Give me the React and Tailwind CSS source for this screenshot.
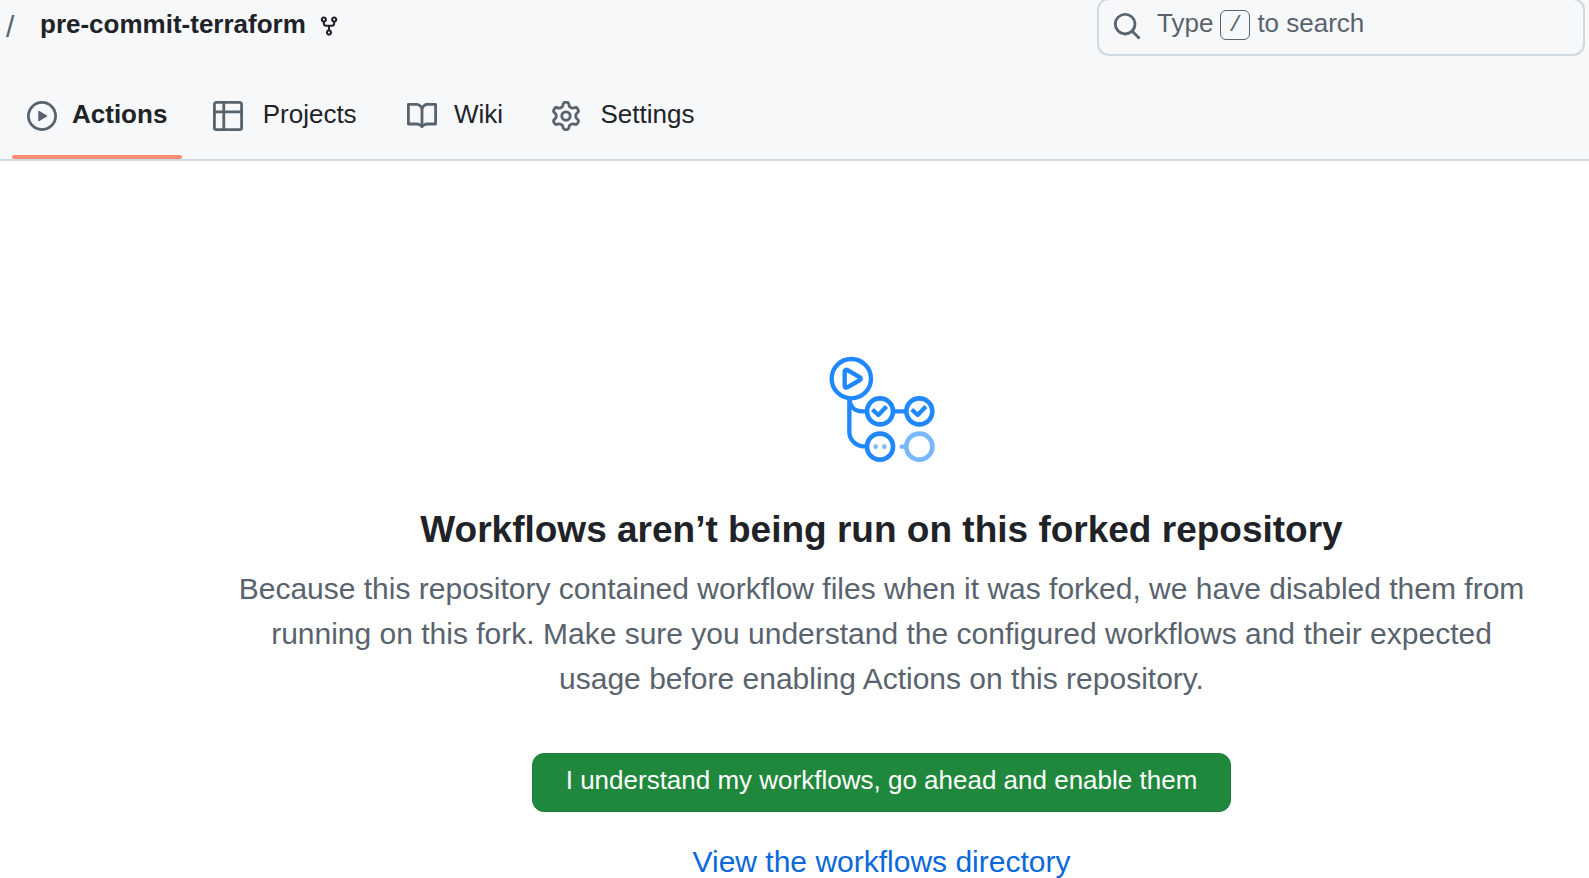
const icons = {
  play: "M8 0a8 8 0 1 1 0 16A8 8 0 0 1 8 0ZM1.5 8a6.5 6.5 0 1 0 13 0 6.5 6.5 0 0 0-13 0Zm4.879-2.773 4.264 2.559a.25.25 0 0 1 0 .428l-4.264 2.559A.25.25 0 0 1 6 10.559V5.442a.25.25 0 0 1 .379-.215Z",
  table: "M0 1.75C0 .784.784 0 1.75 0h12.5C15.216 0 16 .784 16 1.75v12.5A1.75 1.75 0 0 1 14.25 16H1.75A1.75 1.75 0 0 1 0 14.25ZM6.5 6.5v8h7.75a.25.25 0 0 0 .25-.25V6.5Zm8-1.5V1.75a.25.25 0 0 0-.25-.25H6.5V5Zm-13 1.5v7.75c0 .138.112.25.25.25H5v-8ZM5 5V1.5H1.75a.25.25 0 0 0-.25.25V5Z",
  book: "M0 1.75A.75.75 0 0 1 .75 1h4.253c1.227 0 2.317.59 3 1.501A3.743 3.743 0 0 1 11.006 1h4.245a.75.75 0 0 1 .75.75v10.5a.75.75 0 0 1-.75.75h-4.507a2.25 2.25 0 0 0-1.591.659l-.622.621a.75.75 0 0 1-1.06 0l-.622-.621A2.25 2.25 0 0 0 5.258 13H.75a.75.75 0 0 1-.75-.75Zm7.251 10.324.004-5.073-.002-2.253A2.25 2.25 0 0 0 5.003 2.5H1.5v9h3.757a3.75 3.75 0 0 1 1.994.574ZM8.755 4.75l-.004 7.322a3.752 3.752 0 0 1 1.992-.572H14.5v-9h-3.495a2.25 2.25 0 0 0-2.25 2.25Z",
  gear: "M8 0a8.2 8.2 0 0 1 .701.031C9.444.095 9.99.645 10.16 1.29l.288 1.107c.018.066.079.158.212.224.231.114.454.243.668.386.123.082.233.09.299.071l1.103-.303c.644-.176 1.392.021 1.82.63.27.385.506.792.704 1.218.315.675.111 1.422-.364 1.891l-.814.806c-.049.048-.098.147-.088.294.016.257.016.515 0 .772-.01.147.038.246.088.294l.814.806c.475.469.679 1.216.364 1.891a7.977 7.977 0 0 1-.704 1.217c-.428.61-1.176.807-1.82.63l-1.102-.302c-.067-.019-.177-.011-.3.071a5.909 5.909 0 0 1-.668.386c-.133.066-.194.158-.211.224l-.29 1.106c-.168.646-.715 1.196-1.458 1.26a8.006 8.006 0 0 1-1.402 0c-.743-.064-1.289-.614-1.458-1.26l-.289-1.106c-.018-.066-.079-.158-.212-.224a5.738 5.738 0 0 1-.668-.386c-.123-.082-.233-.09-.299-.071l-1.103.303c-.644.176-1.392-.021-1.82-.63a8.12 8.12 0 0 1-.704-1.218c-.315-.675-.111-1.422.363-1.891l.815-.806c.05-.048.098-.147.088-.294a6.214 6.214 0 0 1 0-.772c.01-.147-.038-.246-.088-.294l-.815-.806C.635 6.045.431 5.298.746 4.623a7.92 7.92 0 0 1 .704-1.217c.428-.61 1.176-.807 1.82-.63l1.102.302c.067.019.177.011.3-.071.214-.143.437-.272.668-.386.133-.066.194-.158.211-.224l.29-1.106C6.009.645 6.556.095 7.299.03 7.53.01 7.764 0 8 0Zm-.571 1.525c-.036.003-.108.036-.137.146l-.289 1.105c-.147.561-.549.967-.998 1.189-.173.086-.34.183-.5.29-.417.278-.97.423-1.529.27l-1.103-.303c-.109-.03-.175.016-.195.045-.22.312-.412.644-.573.99-.014.031-.021.11.059.19l.815.806c.411.406.562.957.53 1.456a4.709 4.709 0 0 0 0 .582c.032.499-.119 1.05-.53 1.456l-.815.806c-.081.08-.073.159-.059.19.162.346.353.677.573.989.02.03.085.076.195.046l1.102-.303c.56-.153 1.113-.008 1.53.27.161.107.328.204.501.29.447.222.85.629.997 1.189l.289 1.105c.029.109.101.143.137.146a6.6 6.6 0 0 0 1.142 0c.036-.003.108-.036.137-.146l.289-1.105c.147-.561.549-.967.998-1.189.173-.086.34-.183.5-.29.417-.278.97-.423 1.529-.27l1.103.303c.109.029.175-.016.195-.045.22-.313.411-.644.573-.99.014-.031.021-.11-.059-.19l-.815-.806c-.411-.406-.562-.957-.53-1.456a4.709 4.709 0 0 0 0-.582c-.032-.499.119-1.05.53-1.456l.815-.806c.081-.08.073-.159.059-.19a6.464 6.464 0 0 0-.573-.989c-.02-.03-.085-.076-.195-.046l-1.102.303c-.56.153-1.113.008-1.53-.27a4.44 4.44 0 0 0-.501-.29c-.447-.222-.85-.629-.997-1.189l-.289-1.105c-.029-.11-.101-.143-.137-.146a6.6 6.6 0 0 0-1.142 0ZM11 8a3 3 0 1 1-6 0 3 3 0 0 1 6 0ZM9.5 8a1.5 1.5 0 1 0-3.001.001A1.5 1.5 0 0 0 9.5 8Z",
  fork: "M5 5.372v.878c0 .414.336.75.75.75h4.5a.75.75 0 0 0 .75-.75v-.878a2.25 2.25 0 1 1 1.5 0v.878a2.25 2.25 0 0 1-2.25 2.25h-1.5v2.128a2.251 2.251 0 1 1-1.5 0V8.5h-1.5A2.25 2.25 0 0 1 3.5 6.25v-.878a2.25 2.25 0 1 1 1.5 0ZM5 3.25a.75.75 0 1 0-1.5 0 .75.75 0 0 0 1.5 0Zm6.75.75a.75.75 0 1 0 0-1.5.75.75 0 0 0 0 1.5Zm-3 8.75a.75.75 0 1 0-1.5 0 .75.75 0 0 0 1.5 0Z",
  search: "M10.68 11.74a6 6 0 0 1-7.922-8.982 6 6 0 0 1 8.982 7.922l3.04 3.04a.749.749 0 0 1-.326 1.275.749.749 0 0 1-.734-.215ZM11.5 7a4.499 4.499 0 1 0-8.997 0A4.499 4.499 0 0 0 11.5 7Z",
};

function Icon({ name, className }) {
  return (
    <svg viewBox="0 0 16 16" fill="currentColor" aria-hidden="true" className={className}>
      <path d={icons[name]} />
    </svg>
  );
}

function WorkflowLogo() {
  return (
    <svg
      viewBox="84 44 324 324"
      fill="none"
      stroke="#2088ff"
      strokeWidth="13"
      strokeLinecap="round"
      strokeLinejoin="round"
      aria-hidden="true"
      className="size-[108px]"
    >
      <circle cx="154" cy="115" r="59" />
      <path d="M134 93v44a5 5 0 0 0 8 4l38-22a5 5 0 0 0 0-8l-38-22a5 5 0 0 0-8 4Z" />
      <path d="M148 176v98a44 44 0 0 0 44 44h6M148 176c2 24 18 37 38 37h12M284 213h30" />
      <circle cx="240" cy="213" r="39" strokeWidth="14" />
      <circle cx="358" cy="213" r="39" strokeWidth="14" />
      <circle cx="240" cy="319" r="39" strokeWidth="14" />
      <path d="M222 212l13 12 20-21M340 212l13 12 20-21" strokeLinecap="square" />
      <g stroke="#79b8ff">
        <circle cx="358" cy="319" r="39" strokeWidth="14" />
        <path d="M305 319h9" />
      </g>
      <g fill="#79b8ff" stroke="none">
        <circle cx="227" cy="319" r="7" />
        <circle cx="253" cy="319" r="7" />
      </g>
    </svg>
  );
}

const tabs = [
  { label: "Actions", icon: "play", current: true },
  { label: "Projects", icon: "table" },
  { label: "Wiki", icon: "book" },
  { label: "Settings", icon: "gear" },
];

function Tab({ label, icon, current }) {
  return (
    <li className="flex flex-col">
      <a
        href={"#" + label.toLowerCase()}
        aria-current={current ? "page" : undefined}
        className={"flex flex-1 items-center gap-[15px] px-[15px] " + (current ? "font-bold" : "")}
      >
        <Icon name={icon} className="size-[30px] text-[#59636e]" />
        {/* The hidden bold copy keeps each tab's width fixed when it becomes current. */}
        <span
          data-label={label}
          className="flex flex-col items-center pb-1 leading-8 after:invisible after:h-0 after:overflow-hidden after:font-bold after:content-[attr(data-label)]"
        >
          {label}
        </span>
      </a>
      <span className={"h-1 rounded-full " + (current ? "bg-[#fd8c73]" : "")} />
    </li>
  );
}

export default function App() {
  return (
    <div className="min-h-screen bg-white font-['Liberation_Sans',Arial,sans-serif] text-[26px] text-[#1f2328]">
      <header className="border-b-2 border-[#d1d9e0] bg-[#f6f8fa]">
        <div className="-mt-0.5 flex h-[58px] items-center justify-between pr-1">
          <div className="flex items-center pb-0.5 pl-[6px]">
            <span className="w-[34px] text-[30px] text-[#59636e]">/</span>
            <a href="#repo" className="pb-1 font-bold">
              pre-commit-terraform
            </a>
            <Icon name="fork" className="ml-3 size-[22px]" />
          </div>
          <button
            type="button"
            className="flex h-full w-[488px] items-center rounded-xl border-2 border-[#d1d9e0] px-[13px] pb-0.5 text-[#59636e]"
          >
            <Icon name="search" className="mr-[15px] size-[30px]" />
            <span className="flex items-center pb-0.5">
              <span className="pb-1">Type</span>
              <kbd className="mx-[7px] flex size-[30px] items-center justify-center rounded-md border border-[#59636e] font-['Liberation_Mono',monospace] text-[22px]">
                /
              </kbd>
              <span className="pb-1">to search</span>
            </span>
          </button>
        </div>
        <nav aria-label="Repository" className="mt-[15px]">
          <ul className="flex h-[88px] gap-4 pt-[5px] pl-3">
            {tabs.map((tab) => (
              <Tab key={tab.label} {...tab} />
            ))}
          </ul>
        </nav>
      </header>

      <main className="flex flex-col items-center pt-[194px] pl-[174px] text-center">
        <WorkflowLogo />
        <h1 className="mt-11 text-[37px] leading-[45px] font-bold">
          Workflows aren’t being run on this forked repository
        </h1>
        <p className="mt-[14px] max-w-[1300px] text-[30px] leading-[45px] text-[#59636e]">
          Because this repository contained workflow files when it was forked, we have disabled them from running on
          this fork. Make sure you understand the configured workflows and their expected usage before enabling Actions
          on this repository.
        </p>
        <button
          type="button"
          className="mt-[52px] h-[59px] rounded-xl border border-[#1f7c3a] bg-[#1f883d] px-[33px] pb-1 text-white"
        >
          I understand my workflows, go ahead and enable them
        </button>
        <a href="#workflows" className="mt-[27px] text-[30px] leading-[45px] text-[#0969da]">
          View the workflows directory
        </a>
      </main>
    </div>
  );
}
